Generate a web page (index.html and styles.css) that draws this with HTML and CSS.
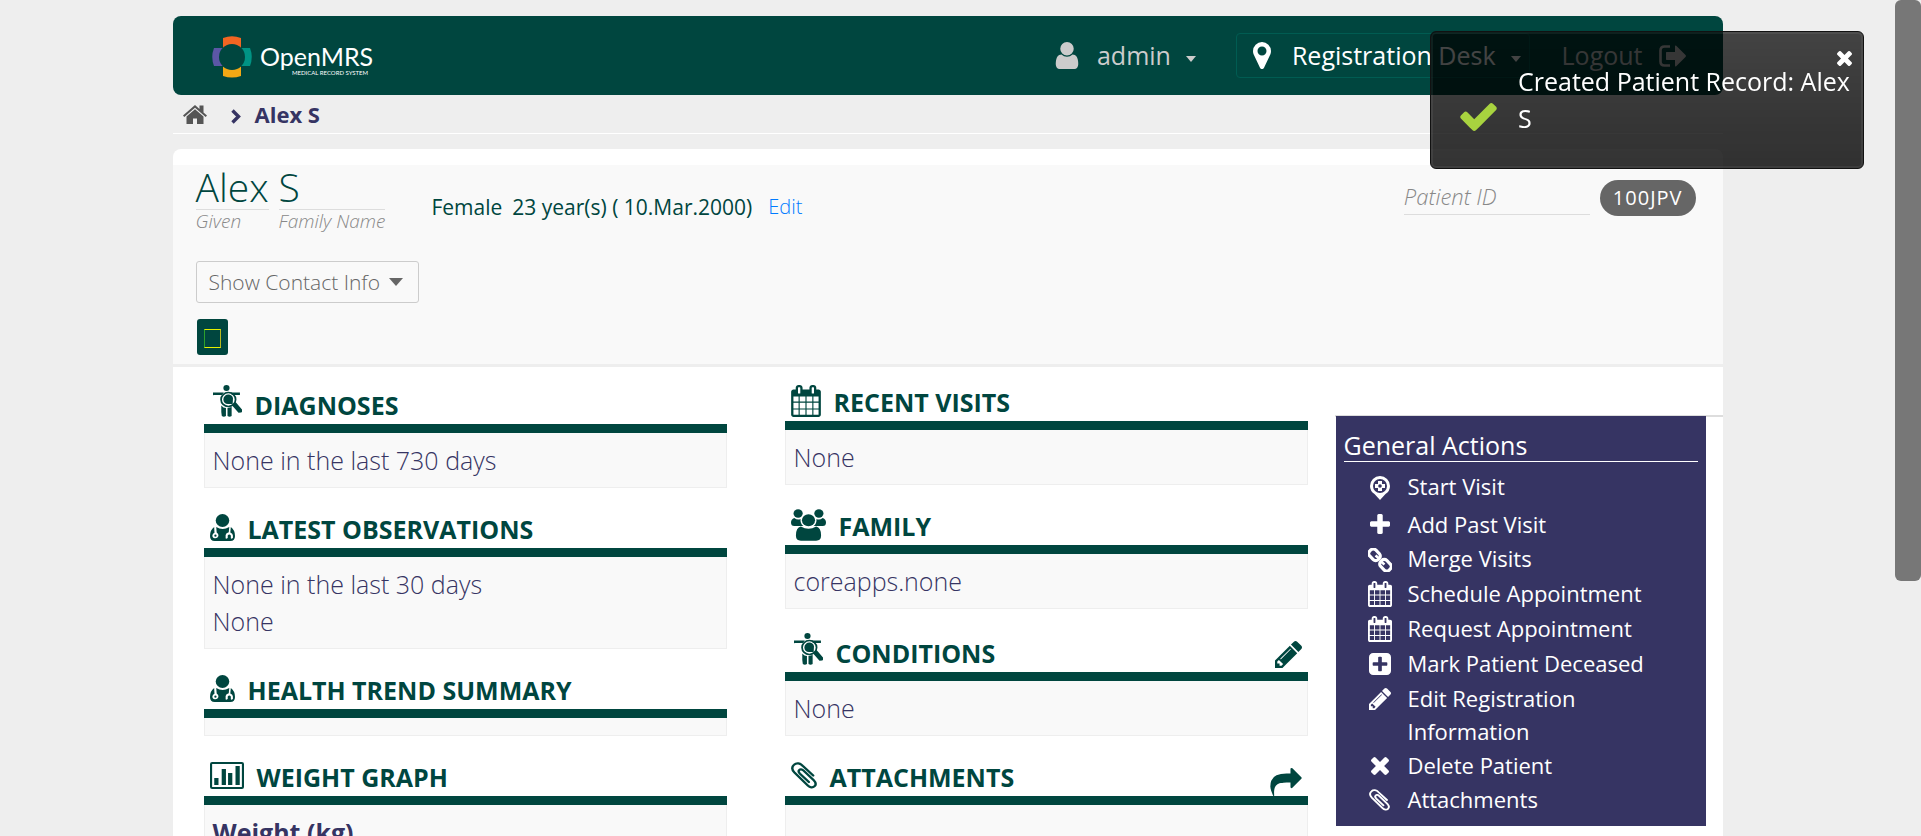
FILE: index.html
```html
<!DOCTYPE html>
<html lang="en">
<head>
<meta charset="utf-8">
<title>OpenMRS Electronic Medical Record</title>
<link rel="stylesheet" href="styles.css">
</head>
<body>
<svg class="sprite" aria-hidden="true">
  <symbol id="i-calendar" viewBox="64 0 1664 1792"><path d="M192 1664h288v-288h-288v288zm352 0h320v-288h-320v288zm-352-352h288v-320h-288v320zm352 0h320v-320h-320v320zm-352-384h288v-288h-288v288zm736 736h320v-288h-320v288zm-384-736h320v-288h-320v288zm768 736h288v-288h-288v288zm-384-352h320v-320h-320v320zm-352-864v-288q0-13-9.5-22.5t-22.5-9.5h-64q-13 0-22.5 9.5t-9.5 22.5v288q0 13 9.5 22.5t22.5 9.5h64q13 0 22.5-9.5t9.5-22.5zm736 864h288v-320h-288v320zm-384-384h320v-288h-320v288zm384 0h288v-288h-288v288zm32-480v-288q0-13-9.5-22.5t-22.5-9.5h-64q-13 0-22.5 9.5t-9.5 22.5v288q0 13 9.5 22.5t22.5 9.5h64q13 0 22.5-9.5t9.5-22.5zm384-64v1280q0 52-38 90t-90 38h-1408q-52 0-90-38t-38-90v-1280q0-52 38-90t90-38h128v-96q0-66 47-113t113-47h64q66 0 113 47t47 113v96h384v-96q0-66 47-113t113-47h64q66 0 113 47t47 113v96h128q52 0 90 38t38 90z"/></symbol>
  <symbol id="i-pencil" viewBox="128 149 1515 1515"><path d="M491 1536l91-91-235-235-91 91v107h128v128h107zm523-928q0-22-22-22-10 0-17 7l-542 542q-7 7-7 17 0 22 22 22 10 0 17-7l542-542q7-7 7-17zm-54-192l416 416-832 832h-416v-416zm683 96q0 53-37 90l-166 166-416-416 166-165q36-38 90-38 53 0 91 38l235 234q37 39 37 91z"/></symbol>
  <symbol id="i-times" viewBox="302 366 1188 1188"><path d="M1490 1322q0 40-28 68l-136 136q-28 28-68 28t-68-28l-294-294-294 294q-28 28-68 28t-68-28l-136-136q-28-28-28-68t28-68l294-294-294-294q-28-28-28-68t28-68l136-136q28-28 68-28t68 28l294 294 294-294q28-28 68-28t68 28l136 136q28 28 28 68t-28 68l-294 294 294 294q28 28 28 68z"/></symbol>
  <symbol id="i-clip" viewBox="0 0 24 27" preserveAspectRatio="none"><path d="M20.500 13.500L11 4C8.500 1 5 0.600 2.800 2.800C0.500 5 1 8 3.200 10.500L15.500 23.500C17.500 25.600 20 26 21.700 24.300C23.400 22.600 23 20.500 21 18.200L11.500 8.500C10 7 8.500 7 7.600 8C6.600 9 7 10.300 8.300 11.700L16.500 20" fill="none" stroke="currentColor" stroke-width="2.200" stroke-linecap="round"/></symbol>
  <symbol id="i-diagnosis" viewBox="0 0 28 32" preserveAspectRatio="none"><circle cx="13" cy="3" r="3"/><path d="M0 7.500h10.500L8.500 10H1A1.200 1.200 0 0 1 0 7.500zM16.500 7.500H26V10H18.500z"/><circle cx="14.800" cy="14.500" r="7" fill="none" stroke="currentColor" stroke-width="1.700"/><path d="M10 14.500a4.800 4.800 0 0 1 5.500-4.900q3.200.4 3.800 3.700l-.3 5.700h-4.500a4.700 4.700 0 0 1-4.500-4.500z"/><path d="M18.500 20.500l3.500-3.200 6 7.200q.8 2-.8 3l-2.600.3zM8 20.500q2 2.500 4.500 2.500v8q-2 1.500-4 0L8 27zM14 23l4-1v9q-2 1.500-4 0z"/></symbol>
  <symbol id="i-doctor" viewBox="0 0 24 27" preserveAspectRatio="none"><circle cx="12" cy="6.500" r="6.500"/><path d="M4 13q-4 3-4 9 0 5 4.500 5h15Q24 27 24 22q0-6-4-9l-.5 5.500q2.500 1 2.500 3V24q-2 1.500-2 0v-2.500q-1.500-2-3 0V24q-2 1.500-2 0v-3q.3-2 3-2.800L18.500 13Q12 17 6 13l.4 5.500q2 1 1.700 3.500-1 2.500-3.500 2.200-2.500-.5-2.300-3 .3-1.700 2-2.500z"/><circle cx="5.200" cy="21.700" r="1.100"/></symbol>
  <symbol id="i-family" viewBox="0 0 32 32" preserveAspectRatio="none"><circle cx="6.500" cy="4.500" r="4.200"/><circle cx="25.500" cy="4.500" r="4.200"/><circle cx="16" cy="11.300" r="6"/><path d="M3 9q3 2.500 5.700 1-.4 4.500 2.600 7H3q-3 0-3-3.500T3 9zM29 9q-3 2.500-5.700 1 .4 4.500-2.600 7H29q3 0 3-3.500T29 9zM9 17.500q7 4.500 14 0 4.500 1 4.500 9 0 5.200-4.500 5.200H9q-4.500 0-4.500-5.200 0-8 4.500-9z"/></symbol>
  <symbol id="i-chart" viewBox="0 0 32 27" preserveAspectRatio="none"><path fill-rule="evenodd" d="M2 0h28q2 0 2 2v23q0 2-2 2H2q-2 0-2-2V2q0-2 2-2zm0 2v23h28V2z"/><path d="M4 16h4v7H4zM11 7h4v16h-4zM17 11h4v12h-4zM24 4h4v19h-4z"/></symbol>
  <symbol id="i-caret" viewBox="0 0 10 6"><path d="M0 0h10L5 6z"/></symbol>
</svg>

<div class="page">
  <header class="topbar">
    <a class="logo" href="#" aria-label="OpenMRS home">
      <svg width="168" height="42" viewBox="0 0 168 42">
        <path d="M11 2q9-3.500 18 0v18H11z" fill="#f26522"/>
        <path d="M11 40q9 3 18 0V22H11z" fill="#f2a815"/>
        <path d="M2 12q-3.500 9 0 18h11V12z" fill="#5b57a6"/>
        <path d="M38 12q3.500 9 0 18H27V12z" fill="#009384"/>
        <circle cx="20" cy="21" r="13" fill="#00463f"/>
        <text class="logo-name" x="48" y="30">OpenMRS</text>
        <text class="logo-tag" x="80" y="39">MEDICAL RECORD SYSTEM</text>
      </svg>
    </a>
    <nav class="usernav">
      <button class="nav-item" type="button">
        <svg class="icon" width="24" height="27" viewBox="256 128 1280 1536"><path d="M1536 1399q0 109-62.500 187t-150.500 78h-854q-88 0-150.500-78t-62.500-187q0-85 8.500-160.500t31.500-152 58.500-131 94-89 134.500-34.500q131 128 313 128t313-128q76 0 134.500 34.500t94 89 58.500 131 31.500 152 8.500 160.500zm-256-887q0 159-112.500 271.500t-271.500 112.500-271.500-112.500-112.500-271.500 112.500-271.500 271.500-112.500 271.500 112.500 112.500 271.500z"/></svg>
        <span>admin</span>
        <svg class="icon caret" width="10" height="6"><use href="#i-caret"/></svg>
      </button>
      <button class="nav-item location" type="button">
        <svg class="icon" width="18" height="27" viewBox="384 128 1024 1536"><path d="M1152 640q0-106-75-181t-181-75-181 75-75 181 75 181 181 75 181-75 75-181zm256 0q0 109-33 179l-364 774q-16 33-47.500 52t-67.500 19-67.500-19-46.500-52l-365-774q-33-70-33-179 0-212 150-362t362-150 362 150 150 362z"/></svg>
        <span>Registration Desk</span>
        <svg class="icon caret" width="10" height="6"><use href="#i-caret"/></svg>
      </button>
      <a class="nav-item logout" href="#">
        <span>Logout</span>
        <svg class="icon" width="27" height="22" viewBox="0 0 27 22"><path d="M11 1.500H5.500q-4 0-4 4v11q0 4 4 4H11" fill="none" stroke="currentColor" stroke-width="2.600"/><path d="M7.500 7H16V1.500q0-1.500 1.200-.7L26.500 10q.8 1 0 2l-9.300 9.200q-1.200.8-1.200-.7V15H7.500Q7 15 7 14V8q0-1 .5-1z"/></svg>
      </a>
    </nav>
  </header>

  <nav class="crumbs" aria-label="Breadcrumb">
    <a class="home" href="#" aria-label="Home"><svg class="icon" width="24" height="19" viewBox="0 0 24 19"><path d="M12 0l4.500 4V.5H20.500V7.500L24 10.500l-1.300 1.500L12 2.800 1.300 12 0 10.500z"/><path d="M12 4.300l8.500 7.200V19H14v-5.500h-4V19H3.500v-7.500z"/></svg></a>
    <svg class="icon chevron" width="10" height="15" viewBox="0 0 10 15"><path d="M1.500 1.500l6 6-6 6" fill="none" stroke="currentColor" stroke-width="3.400"/></svg>
    <span>Alex S</span>
  </nav>

  <main class="card">
    <section class="patient">
      <div class="patient-top">
        <h1 class="names">
          <span class="name">Alex<em>Given</em></span>
          <span class="name">S<em>Family Name</em></span>
        </h1>
        <p class="demographics"><span>Female</span><span>23 year(s) ( 10.Mar.2000)</span><a href="#">Edit</a></p>
        <div class="identifiers"><em>Patient ID</em><span class="badge">100JPV</span></div>
      </div>
      <button class="contact" type="button">Show Contact Info <svg class="icon" width="14" height="8" viewBox="0 0 14 8"><path d="M0 0h14L7 8z"/></svg></button>
      <button class="flag" type="button" aria-label="Patient flag"><span class="tofu"></span></button>
    </section>

    <div class="dashboard">
      <div class="columns">
        <div class="column">
          <section class="info">
            <h3 class="tall"><svg class="icon" width="29" height="32"><use href="#i-diagnosis"/></svg>Diagnoses</h3>
            <div class="body"><p>None in the last 730 days</p></div>
          </section>
          <section class="info">
            <h3><svg class="icon" width="25" height="27"><use href="#i-doctor"/></svg>Latest Observations</h3>
            <div class="body"><p>None in the last 30 days</p><p>None</p></div>
          </section>
          <section class="info">
            <h3><svg class="icon" width="25" height="27"><use href="#i-doctor"/></svg>Health Trend Summary</h3>
            <div class="body"></div>
          </section>
          <section class="info">
            <h3><svg class="icon" width="34" height="27"><use href="#i-chart"/></svg>Weight Graph</h3>
            <div class="body"><p><strong>Weight (kg)</strong></p></div>
          </section>
        </div>
        <div class="column">
          <section class="info">
            <h3><svg class="icon" width="30" height="32"><use href="#i-calendar"/></svg>Recent Visits</h3>
            <div class="body"><p>None</p></div>
          </section>
          <section class="info">
            <h3><svg class="icon" width="35" height="32"><use href="#i-family"/></svg>Family</h3>
            <div class="body"><p>coreapps.none</p></div>
          </section>
          <section class="info">
            <h3 class="tall"><svg class="icon" width="29" height="32"><use href="#i-diagnosis"/></svg>Conditions
              <a class="tool" href="#" aria-label="Edit conditions"><svg class="icon" width="27" height="27"><use href="#i-pencil"/></svg></a></h3>
            <div class="body"><p>None</p></div>
          </section>
          <section class="info">
            <h3><svg class="icon" width="26" height="27"><use href="#i-clip"/></svg>Attachments
              <a class="tool share" href="#" aria-label="Open attachments"><svg class="icon" width="32" height="28" viewBox="0 64 1792 1600"><path d="M1792 640q0 26-19 45l-512 512q-19 19-45 19t-45-19-19-45v-256h-224q-98 0-175.500 6t-154 21.500-133 42.500-105.500 69.500-80 101-48.500 138.500-17.500 181q0 55 5 123 0 6 2.500 23.500t2.500 26.500q0 15-8.500 25t-23.500 10q-16 0-28-17-7-9-13-22t-13.500-30-10.500-24q-127-285-127-451 0-199 53-333 162-403 875-403h224v-256q0-26 19-45t45-19 45 19l512 512q19 19 19 45z"/></svg></a></h3>
            <div class="body"><p>&nbsp;</p></div>
          </section>
        </div>
      </div>

      <aside class="side">
        <div class="actions">
          <h2>General Actions</h2>
          <ul>
            <li class="first"><a href="#"><svg class="icon" width="20" height="24" viewBox="0 0 20 24"><path fill-rule="evenodd" d="M10 0a10 10 0 0 1 10 10q0 5-4.500 8L10 24l-5.500-6Q0 15 0 10A10 10 0 0 1 10 0zm0 3a7 7 0 1 0 0 14 7 7 0 0 0 0-14z"/><path d="M8 5h4v3h3v4h-3v3H8v-3H5V8h3z"/><circle cx="10" cy="10" r="1.800" fill="#363463"/></svg><span>Start Visit</span></a></li>
            <li><a href="#"><svg class="icon" width="20" height="20" viewBox="192 128 1408 1408"><path d="M1600 736v192q0 40-28 68t-68 28h-416v416q0 40-28 68t-68 28h-192q-40 0-68-28t-28-68v-416h-416q-40 0-68-28t-28-68v-192q0-40 28-68t68-28h416v-416q0-40 28-68t68-28h192q40 0 68 28t28 68v416h416q40 0 68 28t28 68z"/></svg><span>Add Past Visit</span></a></li>
            <li class="tall"><a href="#"><svg class="icon" width="24" height="24" viewBox="0 0 24 24"><g fill="none" stroke="currentColor" stroke-width="3.200"><rect x="0.500" y="2.500" width="12" height="8.500" rx="3.500" transform="rotate(45 6.500 6.750)"/><rect x="11.500" y="13" width="12" height="8.500" rx="3.500" transform="rotate(45 17.500 17.250)"/><path d="M7.500 7.500l3 2.500M13.500 14l3 2.500" stroke-width="2.600"/></g></svg><span>Merge Visits</span></a></li>
            <li class="tall"><a href="#"><svg class="icon" width="24" height="26"><use href="#i-calendar"/></svg><span>Schedule Appointment</span></a></li>
            <li class="tall"><a href="#"><svg class="icon" width="24" height="26"><use href="#i-calendar"/></svg><span>Request Appointment</span></a></li>
            <li class="tall"><a href="#"><svg class="icon" width="22" height="22" viewBox="128 128 1536 1536"><path d="M1408 960v-128q0-26-19-45t-45-19h-320v-320q0-26-19-45t-45-19h-128q-26 0-45 19t-19 45v320h-320q-26 0-45 19t-19 45v128q0 26 19 45t45 19h320v320q0 26 19 45t45 19h128q26 0 45-19t19-45v-320h320q26 0 45-19t19-45zm256-544v960q0 119-84.500 203.500t-203.500 84.500h-960q-119 0-203.500-84.500t-84.500-203.500v-960q0-119 84.500-203.500t203.500-84.500h960q119 0 203.500 84.500t84.500 203.500z"/></svg><span>Mark Patient Deceased</span></a></li>
            <li><a href="#"><svg class="icon" width="22" height="22"><use href="#i-pencil"/></svg><span>Edit Registration Information</span></a></li>
            <li><a href="#"><svg class="icon" width="18" height="18"><use href="#i-times"/></svg><span>Delete Patient</span></a></li>
            <li><a href="#"><svg class="icon" width="21" height="22"><use href="#i-clip"/></svg><span>Attachments</span></a></li>
          </ul>
        </div>
      </aside>
    </div>
  </main>
</div>

<div class="toast" role="status">
  <svg class="icon check" width="37" height="28" viewBox="121 334 1550 1188"><path d="M1671 566q0 40-28 68l-724 724-136 136q-28 28-68 28t-68-28l-136-136-362-362q-28-28-28-68t28-68l136-136q28-28 68-28t68 28l294 295 656-657q28-28 68-28t68 28l136 136q28 28 28 68z"/></svg>
  <p>Created Patient Record: Alex S</p>
  <button class="close" type="button" aria-label="Close"><svg class="icon" width="15" height="15"><use href="#i-times"/></svg></button>
</div>
<div class="scrollbar" aria-hidden="true"></div>
</body>
</html>
```

FILE: styles.css
```css
* { box-sizing: border-box; }

body {
  margin: 0;
  height: 100vh;
  overflow: hidden;
  padding-right: 26px;
  background: #eee;
  color: #363463;
  font: 300 25px/37px "Open Sans", sans-serif;
}

h1, h2, h3, p, ul { margin: 0; padding: 0; font-weight: inherit; font-size: inherit; }
ul { list-style: none; }
a { color: inherit; text-decoration: none; }
button { font: inherit; color: inherit; background: none; border: 0; padding: 0; cursor: pointer; }

.sprite { display: none; }
.icon { display: block; flex: none; fill: currentColor; }

.page { max-width: 1550px; margin: 0 auto; padding-top: 16px; }

/* top bar */
.topbar {
  display: flex;
  align-items: flex-start;
  justify-content: space-between;
  padding: 17px 37px 17px 39px;
  border-radius: 8px;
  background: #00463f;
}
.logo { padding-top: 3px; }
.logo svg { display: block; }
.logo-name { font: 400 25px Lato, sans-serif; fill: #fff; }
.logo-tag { font: 400 6px Lato, sans-serif; fill: #fff; }
.usernav { display: flex; align-items: center; color: #ccc; font-weight: 400; }
.nav-item { display: flex; align-items: center; line-height: 43px; }
.nav-item .icon + span { margin-left: 18px; }
.nav-item .caret { margin: 6px 0 0 15px; }
.location {
  margin: 0 32px 0 40px;
  padding: 0 8px 0 16px;
  border: 1px solid #005c52;
  border-radius: 4px;
  color: #fff;
}
.location .icon + span { margin-left: 21px; }
.logout .icon { margin-left: 16px; }

/* breadcrumb */
.crumbs {
  display: flex;
  align-items: center;
  height: 39px;
  padding: 0 10px;
  border-bottom: 1px solid #fff;
  font-size: 22px;
  font-weight: 700;
}
.home { color: #555; }
.chevron { margin: 4px 14px 0 24px; }

/* patient header */
.card { margin-top: 15px; padding-top: 16px; border-radius: 8px 8px 0 0; background: #fff; }
.patient {
  padding: 0 23px 9px;
  border-bottom: 3px solid #eee;
  background: #f9f9f9;
  color: #00463f;
}
.patient-top { display: flex; align-items: flex-start; height: 69px; font-size: 21px; line-height: 30px; }
.names { display: flex; gap: 10px; font-size: 39px; line-height: 44px; }
.name em {
  display: block;
  border-top: 1px solid #ddd;
  color: #888;
  font-size: 19px;
  line-height: 23px;
}
.demographics { display: flex; margin: 27px 0 0 46px; font-weight: 400; }
.demographics span { margin-right: 10px; }
.demographics a { margin-left: 6px; color: #007bff; font-size: 20px; font-weight: 300; }
.identifiers { display: flex; gap: 10px; margin: 15px 4px 0 auto; }
.identifiers em { width: 186px; height: 35px; border-bottom: 1px solid #ddd; color: #888; font-size: 22px; line-height: 33px; }
.badge {
  height: 36px;
  padding: 0 13px;
  border-radius: 18px;
  background: #666;
  color: #fff;
  font-size: 20px;
  font-weight: 400;
  line-height: 36px;
  letter-spacing: 1px;
}
.contact {
  display: flex;
  align-items: center;
  gap: 9px;
  margin-top: 27px;
  padding: 0 15px 0 12px;
  border: 1px solid #ccc;
  border-radius: 3px;
  color: #666;
  font-size: 21px;
  line-height: 40px;
}
.flag { display: block; margin: 16px 1px 0; padding: 10px 7px 7px; border-radius: 3px; background: #00463f; }
.tofu { display: block; width: 17px; height: 19px; border: 1px solid #e6f000; border-left-color: #2ca02c; border-right-color: #b8b81c; }

/* dashboard */
.dashboard { display: flex; align-items: flex-start; }
.columns {
  display: grid;
  grid-template-columns: 1fr 1fr;
  gap: 58px;
  flex: 1;
  padding: 18px 27px 0 31px;
}
.info { margin-bottom: 24px; }
.info h3 {
  display: flex;
  align-items: flex-end;
  gap: 13px;
  height: 45px;
  padding-left: 6px;
  border-bottom: 9px solid #00463f;
  color: #00463f;
  font-weight: 700;
  line-height: 38px;
  text-transform: uppercase;
}
.info h3.tall { height: 48px; padding-left: 9px; }
.info h3 > .icon { margin-bottom: 7px; }
.info h3 > .icon[height="32"] { margin-bottom: 4px; }
.info h3.tall > .icon { margin-bottom: 7px; }
.tool { margin: 0 6px 4px auto; }
.share { margin-bottom: 0; }
.body { padding: 9px 8px 8px; border: 1px solid #eee; border-top: 0; background: #f9f9f9; }
.body strong { font-weight: 700; }

/* actions */
.side { flex: none; width: 388px; margin-top: 48px; border-top: 2px solid #ddd; }
.actions {
  margin: -1px 17px 0 1px;
  padding: 14px 8px 10px;
  background: #363463;
  color: #fff;
  font-weight: 400;
}
.actions h2 { border-bottom: 1px solid #fff; line-height: 31px; }
.actions ul {
  display: grid;
  gap: 1px;
  padding: 8px 24px 0;
  font-size: 22px;
  line-height: 33px;
}
.actions a { display: grid; grid-template-columns: 24px 1fr; gap: 16px; }
.actions .icon { justify-self: center; margin-top: 6px; }
.actions .icon[height="26"] { margin-top: 4px; }
.actions .icon[height="18"] { margin-top: 8px; }
.actions .tall { min-height: 34px; }
.actions .first { min-height: 37px; }

/* notification */
.toast {
  position: fixed;
  top: 31px;
  right: 57px;
  display: flex;
  align-items: center;
  gap: 21px;
  width: 434px;
  padding: 31px 8px 31px 29px;
  border: 1px solid #111;
  border-radius: 6px;
  background: linear-gradient(rgba(0, 0, 0, .72), rgba(0, 0, 0, .8));
  box-shadow: inset 0 0 0 2px rgba(255, 255, 255, .06);
  color: #fff;
  font-weight: 400;
}
.check { align-self: flex-end; margin-bottom: 6px; color: #a8d33f; }
.close { position: absolute; top: 19px; right: 11px; }

.scrollbar {
  position: fixed;
  top: 0;
  right: 0;
  width: 26px;
  height: 581px;
  border-radius: 6px;
  background: #777;
}
```
